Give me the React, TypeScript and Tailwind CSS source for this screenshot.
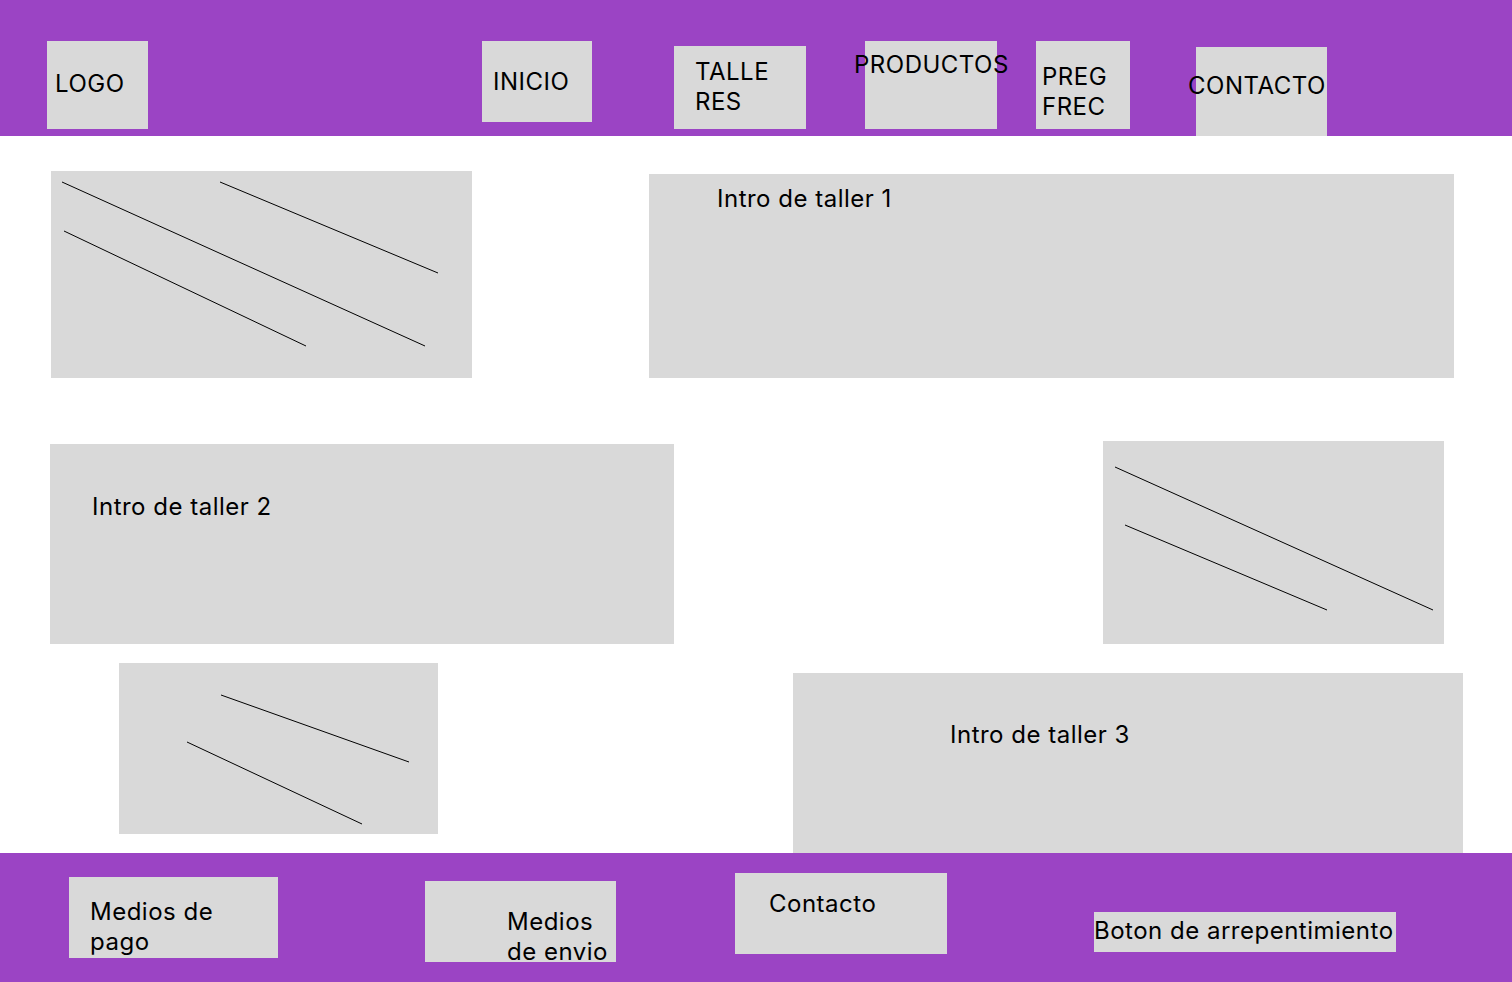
import React from "react";

const font = { fontFamily: "Inter, 'Noto Sans', sans-serif" };

function Lines({ w, h, lines }: { w: number; h: number; lines: number[][] }) {
  return (
    <svg className="absolute inset-0" width={w} height={h} viewBox={`0 0 ${w} ${h}`}>
      {lines.map((l, i) => (
        <line key={i} x1={l[0]} y1={l[1]} x2={l[2]} y2={l[3]} stroke="#000" strokeWidth="1" />
      ))}
    </svg>
  );
}

export default function App() {
  return (
    <div className="w-[1512px] h-[982px] bg-white overflow-hidden text-black text-[24px] leading-[29px] tracking-[0.5px]" style={font}>
      {/* Header */}
      <header className="flex items-start h-[136px] bg-[#9b44c4]">
        <div className="ml-[47px] mt-[41px] w-[101px] h-[88px] bg-[#d9d9d9] pl-[8px] pt-[28px]">LOGO</div>
        <div className="ml-[334px] mt-[41px] w-[110px] h-[81px] bg-[#d9d9d9] pl-[11px] pt-[26px]">INICIO</div>
        <div className="ml-[82px] mt-[46px] w-[132px] h-[83px] bg-[#d9d9d9] pl-[21px] pt-[11px] leading-[30px]">
          TALLE<br />RES
        </div>
        <div className="ml-[59px] mt-[41px] w-[132px] h-[88px] bg-[#d9d9d9] pt-[9px]">
          <div className="-ml-[11px] whitespace-nowrap">PRODUCTOS</div>
        </div>
        <div className="ml-[39px] mt-[41px] w-[94px] h-[88px] bg-[#d9d9d9] pl-[6px] pt-[21px] leading-[30px]">
          PREG<br />FREC
        </div>
        <div className="ml-[66px] mt-[47px] w-[131px] h-[89px] bg-[#d9d9d9] pt-[24px]">
          <div className="-ml-[8px] whitespace-nowrap">CONTACTO</div>
        </div>
      </header>

      {/* Row 1 */}
      <section className="flex items-start h-[242px]">
        <div className="relative ml-[51px] mt-[35px] w-[421px] h-[207px] bg-[#d9d9d9]">
          <Lines w={421} h={207} lines={[[11, 11, 374, 175], [169, 11, 387, 102], [13, 60, 255, 175]]} />
        </div>
        <div className="ml-[177px] mt-[38px] w-[805px] h-[204px] bg-[#d9d9d9] pl-[68px] pt-[10px]">Intro de taller 1</div>
      </section>

      {/* Row 2 */}
      <section className="flex items-start h-[266px]">
        <div className="ml-[50px] mt-[66px] w-[624px] h-[200px] bg-[#d9d9d9] pl-[42px] pt-[48px]">Intro de taller 2</div>
        <div className="relative ml-[429px] mt-[63px] w-[341px] h-[203px] bg-[#d9d9d9]">
          <Lines w={341} h={203} lines={[[12, 26, 330, 169], [22, 84, 224, 169]]} />
        </div>
      </section>

      {/* Row 3 */}
      <section className="flex items-start h-[209px]">
        <div className="relative ml-[119px] mt-[19px] w-[319px] h-[171px] bg-[#d9d9d9]">
          <Lines w={319} h={171} lines={[[102, 32, 290, 99], [68, 79, 243, 161]]} />
        </div>
        <div className="ml-[355px] mt-[29px] w-[670px] h-[180px] bg-[#d9d9d9] pl-[157px] pt-[47px]">Intro de taller 3</div>
      </section>

      {/* Footer */}
      <footer className="flex items-start h-[129px] bg-[#9b44c4]">
        <div className="ml-[69px] mt-[24px] w-[209px] h-[81px] bg-[#d9d9d9] pl-[21px] pt-[20px] leading-[30px]">
          Medios de<br />pago
        </div>
        <div className="ml-[147px] mt-[28px] w-[191px] h-[81px] bg-[#d9d9d9] pl-[82px] pt-[26px] leading-[30px] whitespace-nowrap">
          Medios<br />de envio
        </div>
        <div className="ml-[119px] mt-[20px] w-[212px] h-[81px] bg-[#d9d9d9] pl-[34px] pt-[16px]">Contacto</div>
        <div className="ml-[147px] mt-[59px] w-[302px] h-[40px] bg-[#d9d9d9] pt-[4px] whitespace-nowrap">
          Boton de arrepentimiento
        </div>
      </footer>
    </div>
  );
}
